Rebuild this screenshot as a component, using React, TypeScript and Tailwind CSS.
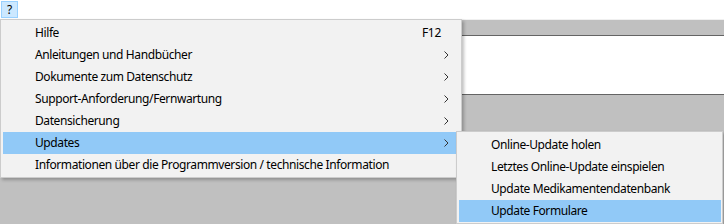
import { ReactNode } from "react";

const font = { fontFamily: '"Noto Sans", "Open Sans", sans-serif' };

function Chevron() {
  return (
    <svg width="5" height="8" viewBox="0 0 5 8" className="shrink-0">
      <path d="M0.5 0.5 L4 4 L0.5 7.5" fill="none" stroke="#333" strokeWidth="1" />
    </svg>
  );
}

function Item({
  label,
  active,
  right,
}: {
  label: string;
  active?: boolean;
  right?: ReactNode;
}) {
  return (
    <div
      className={`flex h-[22px] items-center pl-[32px] pr-[8px] ${active ? "bg-[#91c9f7]" : ""}`}
    >
      <span className="flex-1 whitespace-nowrap tracking-[-0.4px]">{label}</span>
      {right}
    </div>
  );
}

export default function App() {
  const mainItems = [
    { label: "Hilfe", right: <span className="pr-[8px] tracking-[-0.3px]">F12</span> },
    { label: "Anleitungen und Handbücher", right: <Chevron /> },
    { label: "Dokumente zum Datenschutz", right: <Chevron /> },
    { label: "Support-Anforderung/Fernwartung", right: <Chevron /> },
    { label: "Datensicherung", right: <Chevron /> },
    { label: "Updates", right: <Chevron />, active: true },
    { label: "Informationen über die Programmversion / technische Information" },
  ];
  const subItems = [
    "Online-Update holen",
    "Letztes Online-Update einspielen",
    "Update Medikamentendatenbank",
    "Update Formulare",
  ];

  return (
    <div className="relative h-[224px] w-[724px] overflow-hidden bg-white text-[12px] text-black" style={font}>
      {/* menu bar */}
      <div className="flex h-[19px] items-start bg-white">
        <div className="ml-[1px] mt-[1px] flex h-[17px] w-[17px] items-center justify-center border border-[#99d1ff] bg-[#cce8ff] text-[12px] leading-none">
          ?
        </div>
      </div>
      {/* window content behind */}
      <div className="h-[1px] bg-[#f0f0f0]" />
      <div className="h-[15px] bg-[#c0c0c0]" />
      <div className="h-[1px] bg-[#646464]" />
      <div className="h-[58px] bg-white" />
      <div className="h-[1px] bg-[#646464]" />
      <div className="h-[200px] bg-[#c0c0c0]" />

      {/* main dropdown */}
      <div className="absolute left-0 top-[19px] w-[462px] border border-[#cccccc] bg-[#f2f2f2] pb-[1px] pl-[2px] pr-[4px] pt-[2px] shadow-[2px_2px_3px_rgba(0,0,0,0.25)]">
        {mainItems.map((it) => (
          <Item key={it.label} label={it.label} right={it.right} active={it.active} />
        ))}
      </div>

      {/* submenu */}
      <div className="absolute left-[456px] top-[131px] w-[267px] border border-[#cccccc] bg-[#f2f2f2] pb-[1px] pl-[2px] pr-[1px] pt-[2px] shadow-[2px_2px_3px_rgba(0,0,0,0.25)]">
        {subItems.map((s, i) => (
          <Item key={s} label={s} active={i === 3} />
        ))}
      </div>
    </div>
  );
}
